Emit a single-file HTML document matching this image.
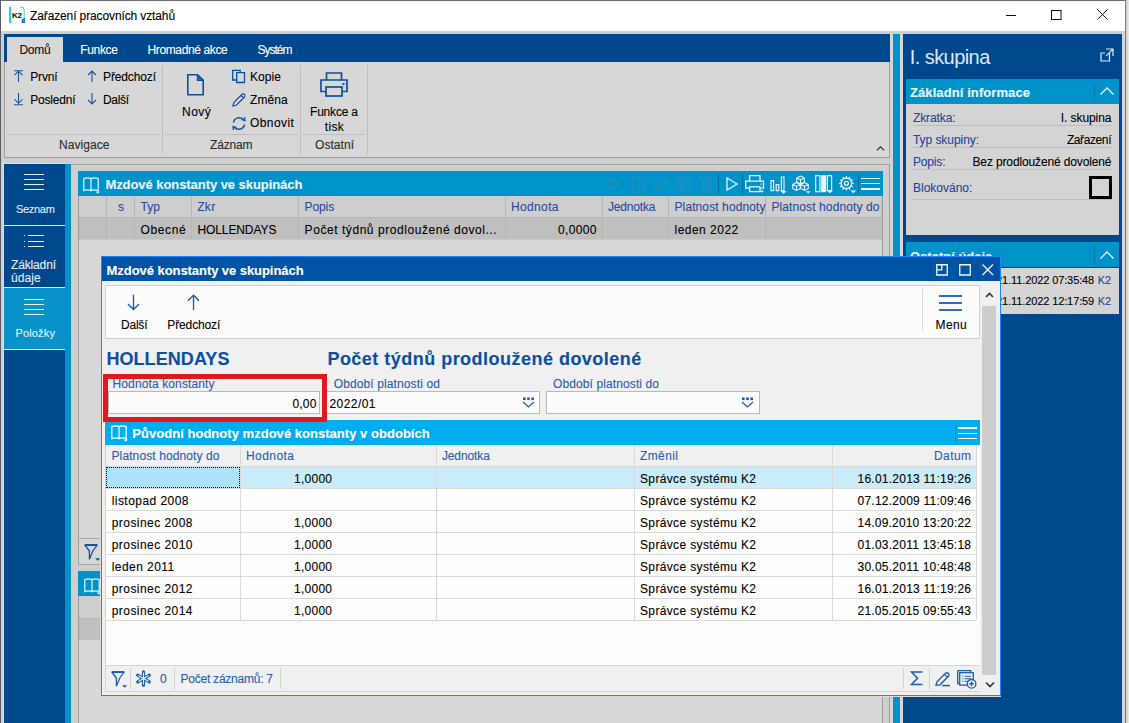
<!DOCTYPE html>
<html><head><meta charset="utf-8">
<style>
*{margin:0;padding:0;box-sizing:border-box}
html,body{width:1129px;height:723px;overflow:hidden;background:#d4d4d4;font-family:"Liberation Sans",sans-serif;font-size:12px;color:#000}
.a{position:absolute}
.t{position:absolute;white-space:nowrap;line-height:1;-webkit-text-stroke:0.1px currentColor}
svg{position:absolute;overflow:visible}
</style></head><body>
<div class="a" style="left:1px;top:1px;width:1124px;height:30px;background:#fff;"></div>
<div class="a" style="left:0px;top:0px;width:1126px;height:1px;background:#6e6e6e;"></div>
<div class="a" style="left:0px;top:0px;width:1px;height:723px;background:#5a5f66;"></div>
<div class="a" style="left:1125px;top:0px;width:1px;height:723px;background:#7d7d7d;"></div>
<div class="a" style="left:1126px;top:0px;width:3px;height:723px;background:linear-gradient(90deg,#c9c9c9,#efefef);"></div>
<div class="a" style="left:9px;top:7px;width:2px;height:16px;background:#16dcf2;"></div>
<div class="t" style="top:11.60px;font-size:7px;color:#151515;font-weight:bold;left:12.3px;letter-spacing:-0.2px;transform:scaleX(1.15);transform-origin:left;">K2</div>
<svg style="left:19px;top:6px;" width="7" height="18" viewBox="0 0 7 18"><path d="M1 1 L4.5 1.5 M3.2 1.2 L5.2 3.2 L5.2 11.5" stroke="#33cbe8" stroke-width="0.9" fill="none"/><path d="M2.8 13 Q5 12 6 11.5 L6 17 L2.5 17 Z" fill="#2877d6"/></svg>
<div class="t" style="top:10.00px;font-size:12px;color:#000;letter-spacing:-0.121px;left:30px;">Zařazení pracovních vztahů</div>
<div class="a" style="left:1006px;top:15px;width:10px;height:1px;background:#111;"></div>
<svg style="left:1051px;top:10px;" width="11" height="10" viewBox="0 0 11 10"><rect x="0.5" y="0.5" width="9.5" height="9" fill="none" stroke="#111" stroke-width="1"/></svg>
<svg style="left:1097px;top:9px;" width="11" height="11" viewBox="0 0 11 11"><path d="M0.5 0.5 L10.5 10.5 M10.5 0.5 L0.5 10.5" stroke="#111" stroke-width="1"/></svg>
<div class="a" style="left:1px;top:31px;width:1124px;height:692px;background:#cfcfcf;"></div>
<div class="a" style="left:4px;top:34px;width:886px;height:28px;background:#00488d;"></div>
<div class="a" style="left:7px;top:37px;width:56px;height:25px;background:#d7d7d7;"></div>
<div class="t" style="top:44.00px;font-size:12px;color:#111;letter-spacing:-0.205px;left:19.4px;">Domů</div>
<div class="t" style="top:44.00px;font-size:12px;color:#fff;letter-spacing:-0.329px;left:80.2px;">Funkce</div>
<div class="t" style="top:44.00px;font-size:12px;color:#fff;letter-spacing:-0.375px;left:147.5px;">Hromadné akce</div>
<div class="t" style="top:44.00px;font-size:12px;color:#fff;letter-spacing:-1.0px;left:257.5px;">Systém</div>
<div class="a" style="left:4px;top:62px;width:886px;height:96px;background:#d7d7d7;"></div>
<div class="a" style="left:4px;top:62px;width:1px;height:96px;background:#a0a0a0;"></div>
<div class="a" style="left:889px;top:62px;width:1px;height:96px;background:#a0a0a0;"></div>
<div class="a" style="left:4px;top:157px;width:886px;height:1px;background:#9c9c9c;"></div>
<div class="a" style="left:162px;top:65px;width:1px;height:89px;background:#bdbdbd;"></div>
<div class="a" style="left:300px;top:65px;width:1px;height:89px;background:#bdbdbd;"></div>
<div class="a" style="left:367px;top:65px;width:1px;height:89px;background:#bdbdbd;"></div>
<div class="a" style="left:7px;top:134px;width:153px;height:1px;background:#bdbdbd;"></div>
<div class="a" style="left:165px;top:134px;width:133px;height:1px;background:#bdbdbd;"></div>
<div class="a" style="left:303px;top:134px;width:62px;height:1px;background:#bdbdbd;"></div>
<div class="t" style="top:138.50px;font-size:12px;color:#2b2b2b;letter-spacing:0.053px;left:59px;">Navigace</div>
<div class="t" style="top:138.50px;font-size:12px;color:#2b2b2b;letter-spacing:-0.149px;left:210px;">Záznam</div>
<div class="t" style="top:138.50px;font-size:12px;color:#2b2b2b;letter-spacing:0.057px;left:315px;">Ostatní</div>
<svg style="left:13px;top:70px;" width="11" height="13" viewBox="0 0 11 13"><path d="M1 0.75 H10 M5.5 1.5 V12 M1.5 5.2 L5.5 1.2 L9.5 5.2" stroke="#1f5096" stroke-width="1.1" fill="none"/></svg>
<div class="t" style="top:71.00px;font-size:12px;color:#000;letter-spacing:-0.125px;left:30.2px;">První</div>
<svg style="left:13px;top:93px;" width="11" height="13" viewBox="0 0 11 13"><path d="M5.5 0 V10.2 M1.5 6.3 L5.5 10.3 L9.5 6.3 M1 11.8 H10" stroke="#1f5096" stroke-width="1.1" fill="none"/></svg>
<div class="t" style="top:94.00px;font-size:12px;color:#000;letter-spacing:-0.17px;left:30.2px;">Poslední</div>
<svg style="left:87px;top:70px;" width="10" height="13" viewBox="0 0 10 13"><path d="M5 1 V12 M1 5 L5 1 L9 5" stroke="#1f5096" stroke-width="1.1" fill="none"/></svg>
<div class="t" style="top:71.00px;font-size:12px;color:#000;letter-spacing:-0.127px;left:103px;">Předchozí</div>
<svg style="left:87px;top:93px;" width="10" height="13" viewBox="0 0 10 13"><path d="M5 0 V11 M1 7 L5 11 L9 7" stroke="#1f5096" stroke-width="1.1" fill="none"/></svg>
<div class="t" style="top:94.00px;font-size:12px;color:#000;letter-spacing:-0.336px;left:103px;">Další</div>
<svg style="left:187px;top:74px;" width="18" height="22" viewBox="0 0 18 22"><path d="M0.8 0.8 H10.6 L16.2 6.2 V20.8 H0.8 Z M10.6 0.8 V6.2 H16.2" stroke="#0e4f9d" stroke-width="1.6" fill="none"/><path d="M11.4 2.2 L14.8 5.4 H11.4 Z" fill="#0e4f9d"/></svg>
<div class="t" style="top:106.00px;font-size:12px;color:#000;letter-spacing:0.485px;left:182px;">Nový</div>
<svg style="left:232px;top:69px;" width="14" height="16" viewBox="0 0 14 16"><path d="M0.7 1.3 H8.2 V11 H0.7 Z" stroke="#0e4f9d" stroke-width="1.3" fill="none"/><path d="M4.7 3.7 H12.5 V13.5 H4.7 Z" stroke="#0e4f9d" stroke-width="1.3" fill="#d7d7d7"/></svg>
<div class="t" style="top:71.00px;font-size:12px;color:#000;letter-spacing:0.078px;left:250px;">Kopie</div>
<svg style="left:232px;top:93px;" width="14" height="14" viewBox="0 0 14 14"><path d="M1 13 L1.8 9.5 L10 1.3 Q11.3 0.3 12.5 1.5 Q13.5 2.7 12.5 4 L4.3 12.2 Z M9 2.5 L11.5 5" stroke="#0e4f9d" stroke-width="1.15" fill="none"/></svg>
<div class="t" style="top:94.00px;font-size:12px;color:#000;letter-spacing:0.064px;left:250px;">Změna</div>
<svg style="left:232px;top:116px;" width="14" height="15" viewBox="0 0 14 15"><path d="M1.5 6.5 A5.8 5.8 0 0 1 11.8 4 M12.5 8.5 A5.8 5.8 0 0 1 2.2 11" stroke="#0e4f9d" stroke-width="1.4" fill="none"/><path d="M9.5 3.5 L13 4.5 L12.5 1" stroke="#0e4f9d" stroke-width="1.3" fill="none"/><path d="M4.5 11.5 L1 10.5 L1.5 14" stroke="#0e4f9d" stroke-width="1.3" fill="none"/></svg>
<div class="t" style="top:117.00px;font-size:12px;color:#000;letter-spacing:0.409px;left:250px;">Obnovit</div>
<svg style="left:320px;top:72px;" width="28" height="25" viewBox="0 0 28 25"><path d="M6.5 8 V1 H21.5 V8" stroke="#0e4f9d" stroke-width="1.7" fill="none"/><path d="M5.5 19.5 H1 V8 H27 V19.5 H22.5" stroke="#0e4f9d" stroke-width="1.7" fill="none"/><rect x="6" y="15" width="16" height="9" stroke="#0e4f9d" stroke-width="1.7" fill="none"/><rect x="22.5" y="11" width="2" height="2" fill="#0e4f9d"/></svg>
<div class="t" style="top:106.00px;font-size:12px;color:#000;letter-spacing:-0.192px;left:310px;">Funkce a</div>
<div class="t" style="top:120.50px;font-size:12px;color:#000;letter-spacing:0.3px;left:324.8px;">tisk</div>
<svg style="left:875.5px;top:145.5px;" width="10" height="6" viewBox="0 0 10 6"><path d="M0.9 4.3 L4.5 0.8 L8.1 4.3" stroke="#2a2a2a" stroke-width="1.1" fill="none"/></svg>
<div class="a" style="left:3px;top:163px;width:62px;height:560px;background:#e2ded9;"></div>
<div class="a" style="left:4px;top:164px;width:61px;height:559px;background:#00488d;"></div>
<div class="a" style="left:65px;top:164px;width:6px;height:559px;background:#0093ca;"></div>
<div class="a" style="left:24px;top:174px;width:20px;height:1.3px;background:#e6edf5;"></div>
<div class="a" style="left:24px;top:179px;width:20px;height:1.3px;background:#e6edf5;"></div>
<div class="a" style="left:24px;top:184px;width:20px;height:1.3px;background:#e6edf5;"></div>
<div class="a" style="left:24px;top:189px;width:20px;height:1.3px;background:#e6edf5;"></div>
<div class="t" style="top:204.00px;font-size:11px;color:#e6edf5;letter-spacing:-0.275px;left:15.9px;">Seznam</div>
<div class="a" style="left:4px;top:225px;width:61px;height:1.3px;background:#dfe7f0;"></div>
<div class="a" style="left:24px;top:235px;width:1.3px;height:1.3px;background:#e6edf5;"></div>
<div class="a" style="left:28px;top:235px;width:16px;height:1.3px;background:#e6edf5;"></div>
<div class="a" style="left:24px;top:240.5px;width:1.3px;height:1.3px;background:#e6edf5;"></div>
<div class="a" style="left:28px;top:240.5px;width:16px;height:1.3px;background:#e6edf5;"></div>
<div class="a" style="left:24px;top:246px;width:1.3px;height:1.3px;background:#e6edf5;"></div>
<div class="a" style="left:28px;top:246px;width:16px;height:1.3px;background:#e6edf5;"></div>
<div class="t" style="top:259.40px;font-size:12px;color:#e6edf5;letter-spacing:-0.145px;left:11px;">Základní</div>
<div class="t" style="top:272.00px;font-size:12px;color:#e6edf5;letter-spacing:0.085px;left:11px;">údaje</div>
<div class="a" style="left:4px;top:287px;width:61px;height:1.3px;background:#dfe7f0;"></div>
<div class="a" style="left:4px;top:288.3px;width:61px;height:60.4px;background:#0a92ca;"></div>
<div class="a" style="left:24px;top:298.5px;width:20px;height:1.3px;background:#e6f2f9;"></div>
<div class="a" style="left:24px;top:303.5px;width:20px;height:1.3px;background:#e6f2f9;"></div>
<div class="a" style="left:24px;top:309px;width:20px;height:1.3px;background:#e6f2f9;"></div>
<div class="a" style="left:24px;top:314px;width:20px;height:1.3px;background:#e6f2f9;"></div>
<div class="t" style="top:328.00px;font-size:11px;color:#e6f2f9;letter-spacing:0.145px;left:15.5px;">Položky</div>
<div class="a" style="left:4px;top:348.7px;width:61px;height:1.3px;background:#dfe7f0;"></div>
<div class="a" style="left:71px;top:164px;width:819px;height:559px;background:#cfcfcf;"></div>
<div class="a" style="left:71px;top:164px;width:819px;height:1px;background:#a3a3a3;"></div>
<div class="a" style="left:889px;top:164px;width:1px;height:559px;background:#9c9c9c;"></div>
<div class="a" style="left:890px;top:34px;width:3px;height:689px;background:#d6d6d6;"></div>
<div class="a" style="left:893px;top:34px;width:7px;height:689px;background:#0093ca;"></div>
<div class="a" style="left:900px;top:34px;width:3px;height:689px;background:#dcd6d1;"></div>
<div class="a" style="left:78px;top:171px;width:805px;height:394px;background:#d7d7d7;"></div>
<div class="a" style="left:78px;top:171px;width:1px;height:394px;background:#9c9c9c;"></div>
<div class="a" style="left:882px;top:171px;width:1px;height:394px;background:#9c9c9c;"></div>
<div class="a" style="left:78px;top:171px;width:805px;height:24.5px;background:#0093ca;"></div>
<svg style="left:83px;top:177px;" width="18" height="17" viewBox="0 0 18 17"><path d="M0.8 1.6 Q4.4 0.2 8 1.6 V13.6 Q4.4 12.2 0.8 13.6 Z M8 1.6 Q11.6 0.2 15.2 1.6 V13.6 Q11.6 12.2 8 13.6" stroke="#e8f4fa" stroke-width="1.2" fill="none"/><path d="M12.5 14.6 H17 L14.75 16.8 Z" fill="#e8f4fa"/></svg>
<div class="t" style="top:178.00px;font-size:13px;color:#eef6fb;font-weight:bold;letter-spacing:-0.06px;left:105.4px;">Mzdové konstanty ve skupinách</div>
<div class="a" style="left:79px;top:195.5px;width:802px;height:21.5px;background:#cecece;"></div>
<div class="a" style="left:79px;top:217px;width:802px;height:22px;background:#bfbfbf;"></div>
<div class="a" style="left:79px;top:217px;width:802px;height:1px;background:#b9b9b9;"></div>
<div class="a" style="left:79px;top:239px;width:802px;height:1px;background:#c8c8c8;"></div>
<div class="a" style="left:106px;top:195.5px;width:1px;height:44px;background:#b5b5b5;"></div>
<div class="a" style="left:134px;top:195.5px;width:1px;height:44px;background:#b5b5b5;"></div>
<div class="a" style="left:191px;top:195.5px;width:1px;height:44px;background:#b5b5b5;"></div>
<div class="a" style="left:298px;top:195.5px;width:1px;height:44px;background:#b5b5b5;"></div>
<div class="a" style="left:505px;top:195.5px;width:1px;height:44px;background:#b5b5b5;"></div>
<div class="a" style="left:602px;top:195.5px;width:1px;height:44px;background:#b5b5b5;"></div>
<div class="a" style="left:668px;top:195.5px;width:1px;height:44px;background:#b5b5b5;"></div>
<div class="a" style="left:765px;top:195.5px;width:1px;height:44px;background:#b5b5b5;"></div>
<div class="a" style="left:880.5px;top:195.5px;width:1px;height:44px;background:#c4c4c4;"></div>
<div class="t" style="top:201.00px;font-size:12px;color:#2b4a9a;left:118px;">s</div>
<div class="t" style="top:201.00px;font-size:12px;color:#2b4a9a;letter-spacing:0.078px;left:140.4px;">Typ</div>
<div class="t" style="top:201.00px;font-size:12px;color:#2b4a9a;letter-spacing:0.336px;left:197.2px;">Zkr</div>
<div class="t" style="top:201.00px;font-size:12px;color:#2b4a9a;letter-spacing:-0.079px;left:304.5px;">Popis</div>
<div class="t" style="top:201.00px;font-size:12px;color:#2b4a9a;letter-spacing:0.357px;left:511px;">Hodnota</div>
<div class="t" style="top:201.00px;font-size:12px;color:#2b4a9a;letter-spacing:-0.17px;left:608px;">Jednotka</div>
<div class="t" style="top:201.00px;font-size:12px;color:#2b4a9a;letter-spacing:0.103px;left:674.5px;">Platnost hodnoty</div>
<div class="t" style="top:201.00px;font-size:12px;color:#2b4a9a;letter-spacing:0.109px;left:771.4px;">Platnost hodnoty do</div>
<div class="t" style="top:224.00px;font-size:12px;color:#000;letter-spacing:0.597px;left:140.6px;">Obecné</div>
<div class="t" style="top:224.00px;font-size:12px;color:#000;letter-spacing:-0.089px;left:197.4px;">HOLLENDAYS</div>
<div class="t" style="top:224.00px;font-size:12px;color:#000;letter-spacing:0.557px;left:304.6px;">Počet týdnů prodloužené dovol...</div>
<div class="t" style="top:224.00px;font-size:12px;color:#000;letter-spacing:0.342px;right:532.258px;">0,0000</div>
<div class="t" style="top:224.00px;font-size:12px;color:#000;letter-spacing:0.481px;left:674.5px;">leden 2022</div>
<svg style="left:609px;top:177px;" width="12" height="14" viewBox="0 0 12 14"><path d="M1 1 L11 7 L1 13 Z" stroke="#2e8dbb" stroke-width="1.2" fill="none"/></svg>
<svg style="left:631px;top:176px;" width="14" height="17" viewBox="0 0 14 17"><path d="M1 1 H9 L13 5 V16 H1 Z" stroke="#2e8dbb" stroke-width="1.2" fill="none"/></svg>
<svg style="left:654px;top:177px;" width="15" height="15" viewBox="0 0 15 15"><path d="M1 14 L2 10 L11 1 L14 4 L5 13 Z" stroke="#2e8dbb" stroke-width="1.2" fill="none"/></svg>
<svg style="left:676px;top:176px;" width="16" height="17" viewBox="0 0 16 17"><path d="M1 1 H9 V13 H1 Z M5 4 H14 V16 H5 Z" stroke="#2e8dbb" stroke-width="1.2" fill="none"/></svg>
<svg style="left:701px;top:176px;" width="12" height="17" viewBox="0 0 12 17"><path d="M1 4 H11 M4 4 V1 H8 V4 M2 4 V16 H10 V4 M4.5 7 V13 M7.5 7 V13" stroke="#2e8dbb" stroke-width="1.2" fill="none"/></svg>
<div class="a" style="left:718px;top:174px;width:1px;height:20px;background:#0a6d9d;"></div>
<svg style="left:726px;top:177px;" width="12" height="14" viewBox="0 0 12 14"><path d="M1 1 L11 7 L1 13 Z" stroke="#e8f4fa" stroke-width="1.3" fill="none"/></svg>
<div class="a" style="left:742px;top:174px;width:1px;height:20px;background:#0a6d9d;"></div>
<svg style="left:745px;top:175px;" width="20" height="19" viewBox="0 0 20 19"><path d="M4.6 6.2 V0.7 H15 V6.2" stroke="#eaf3f8" stroke-width="1.3" fill="none"/><path d="M4 13.2 H0.7 V6.2 H18.5 V13.2 H15.5" stroke="#eaf3f8" stroke-width="1.3" fill="none"/><rect x="4.6" y="11.8" width="10.4" height="4.8" stroke="#eaf3f8" stroke-width="1.3" fill="none"/><rect x="15.2" y="8.6" width="1.6" height="1" fill="#eaf3f8"/><path d="M15 15.5 H19 L17 17.8 Z" fill="#eaf3f8"/></svg>
<svg style="left:770px;top:176px;" width="18" height="19" viewBox="0 0 18 19"><path d="M1 4.7 H3.6 V14.6 H1 Z M6.2 8.6 H8.8 V14.6 H6.2 Z M11.4 1 H14 V14.6 H11.4 Z" stroke="#eaf3f8" stroke-width="1.2" fill="none"/><path d="M10.5 15 H16.5 L13.5 18 Z" fill="#eaf3f8"/></svg>
<svg style="left:792px;top:175px;" width="19" height="19" viewBox="0 0 19 19"><path d="M4.5 7.5 L8.3 9.4 V13.6 L4.5 15.5 L0.7000000000000002 13.6 V9.4 Z M0.7000000000000002 9.4 L4.5 11.3 L8.3 9.4 M4.5 11.3 V15.5" stroke="#eaf3f8" stroke-width="1.1" fill="#0991c9" stroke-linejoin="round"/><path d="M12.5 7.5 L16.3 9.4 V13.6 L12.5 15.5 L8.7 13.6 V9.4 Z M8.7 9.4 L12.5 11.3 L16.3 9.4 M12.5 11.3 V15.5" stroke="#eaf3f8" stroke-width="1.1" fill="#0991c9" stroke-linejoin="round"/><path d="M8.5 1 L12.3 2.9 V7.1 L8.5 9 L4.7 7.1 V2.9 Z M4.7 2.9 L8.5 4.8 L12.3 2.9 M8.5 4.8 V9" stroke="#eaf3f8" stroke-width="1.1" fill="#0991c9" stroke-linejoin="round"/><path d="M14 16.2 H18.5 L16.25 18.5 Z" fill="#eaf3f8"/></svg>
<svg style="left:815px;top:175px;" width="19" height="19" viewBox="0 0 19 19"><rect x="0.7" y="0.7" width="4.2" height="16" stroke="#eaf3f8" stroke-width="1.2" fill="none"/><rect x="6.2" y="0.2" width="5" height="17" fill="#eaf3f8"/><rect x="12.4" y="0.7" width="4.2" height="15" stroke="#eaf3f8" stroke-width="1.2" fill="none"/><path d="M12 15.5 H18 L15 18.3 Z" fill="#eaf3f8"/></svg>
<svg style="left:840px;top:176px;" width="19" height="19" viewBox="0 0 19 19"><circle cx="6.4" cy="7.3" r="5.3" stroke="#eaf3f8" stroke-width="1.3" fill="none"/><circle cx="6.4" cy="7.3" r="2.0" stroke="#eaf3f8" stroke-width="1.3" fill="none"/><path d="M0 -5.6 L0 -7.3" transform="translate(6.4 7.3) rotate(0)" stroke="#eaf3f8" stroke-width="1.2"/><path d="M0 -5.6 L0 -7.3" transform="translate(6.4 7.3) rotate(30)" stroke="#eaf3f8" stroke-width="1.2"/><path d="M0 -5.6 L0 -7.3" transform="translate(6.4 7.3) rotate(60)" stroke="#eaf3f8" stroke-width="1.2"/><path d="M0 -5.6 L0 -7.3" transform="translate(6.4 7.3) rotate(90)" stroke="#eaf3f8" stroke-width="1.2"/><path d="M0 -5.6 L0 -7.3" transform="translate(6.4 7.3) rotate(120)" stroke="#eaf3f8" stroke-width="1.2"/><path d="M0 -5.6 L0 -7.3" transform="translate(6.4 7.3) rotate(150)" stroke="#eaf3f8" stroke-width="1.2"/><path d="M0 -5.6 L0 -7.3" transform="translate(6.4 7.3) rotate(180)" stroke="#eaf3f8" stroke-width="1.2"/><path d="M0 -5.6 L0 -7.3" transform="translate(6.4 7.3) rotate(210)" stroke="#eaf3f8" stroke-width="1.2"/><path d="M0 -5.6 L0 -7.3" transform="translate(6.4 7.3) rotate(240)" stroke="#eaf3f8" stroke-width="1.2"/><path d="M0 -5.6 L0 -7.3" transform="translate(6.4 7.3) rotate(270)" stroke="#eaf3f8" stroke-width="1.2"/><path d="M0 -5.6 L0 -7.3" transform="translate(6.4 7.3) rotate(300)" stroke="#eaf3f8" stroke-width="1.2"/><path d="M0 -5.6 L0 -7.3" transform="translate(6.4 7.3) rotate(330)" stroke="#eaf3f8" stroke-width="1.2"/><path d="M10.5 14.6 H16 L13.25 17.3 Z" fill="#eaf3f8"/></svg>
<div class="a" style="left:858px;top:174px;width:1px;height:20px;background:#0a6d9d;"></div>
<div class="a" style="left:861px;top:177.6px;width:19px;height:1.4px;background:#eaf3f8;"></div>
<div class="a" style="left:861px;top:183px;width:19px;height:1.4px;background:#eaf3f8;"></div>
<div class="a" style="left:861px;top:188.3px;width:19px;height:1.4px;background:#eaf3f8;"></div>
<div class="a" style="left:79px;top:538px;width:803px;height:1px;background:#a8a8a8;"></div>
<div class="a" style="left:79px;top:539px;width:803px;height:25px;background:#d7d7d7;"></div>
<div class="a" style="left:79px;top:564px;width:803px;height:1px;background:#a8a8a8;"></div>
<svg style="left:84px;top:543.5px;" width="18" height="18" viewBox="0 0 18 18"><path d="M0.8 1 L5.4 7 V15.3 L8.8 7 L13.2 1 Z" stroke="#0e4f9d" stroke-width="1.25" fill="none" stroke-linejoin="bevel"/><path d="M0.8 1 H13.2" stroke="#0e4f9d" stroke-width="1.8"/><path d="M11.2 14.3 H16.2 L13.7 16.8 Z" fill="#0e4f9d"/></svg>
<div class="a" style="left:105px;top:539px;width:1px;height:25px;background:#b8b8b8;"></div>
<div class="a" style="left:78px;top:571px;width:805px;height:152px;background:#d7d7d7;"></div>
<div class="a" style="left:78px;top:571px;width:1px;height:152px;background:#9c9c9c;"></div>
<div class="a" style="left:882px;top:571px;width:1px;height:152px;background:#9c9c9c;"></div>
<div class="a" style="left:78px;top:571px;width:805px;height:25px;background:#0093ca;"></div>
<svg style="left:84px;top:578px;" width="18" height="17" viewBox="0 0 18 17"><path d="M0.8 1.6 Q4.4 0.2 8 1.6 V13.6 Q4.4 12.2 0.8 13.6 Z M8 1.6 Q11.6 0.2 15.2 1.6 V13.6 Q11.6 12.2 8 13.6" stroke="#e8f4fa" stroke-width="1.2" fill="none"/><path d="M12.5 14.6 H17 L14.75 16.8 Z" fill="#e8f4fa"/></svg>
<div class="a" style="left:79px;top:596px;width:802px;height:21.5px;background:#cecece;"></div>
<div class="a" style="left:79px;top:617.5px;width:802px;height:22px;background:#bfbfbf;"></div>
<div class="a" style="left:79px;top:617.5px;width:802px;height:1px;background:#b9b9b9;"></div>
<div class="a" style="left:903px;top:34px;width:219px;height:689px;background:#00488d;"></div>
<div class="a" style="left:1122px;top:34px;width:3px;height:689px;background:#d6d6d6;"></div>
<div class="t" style="top:46.70px;font-size:20px;color:#dfe7f1;letter-spacing:-0.558px;left:909.7px;-webkit-text-stroke:0;">I. skupina</div>
<svg style="left:1100px;top:48px;" width="14" height="14" viewBox="0 0 14 14"><path d="M6 1 H13 V8 M12.8 1.2 L6.2 7.8 M9.5 5 V13 H1 V5 H5" stroke="#e3ebf4" stroke-width="1.2" fill="none"/></svg>
<div class="a" style="left:906px;top:79px;width:213px;height:25px;background:#0093ca;"></div>
<div class="t" style="top:86.00px;font-size:13px;color:#eef6fb;font-weight:bold;letter-spacing:0.089px;left:910px;">Základní informace</div>
<div class="a" style="left:1094px;top:83px;width:1px;height:18px;background:#0b77a8;"></div>
<svg style="left:1100px;top:87px;" width="14" height="8" viewBox="0 0 14 8"><path d="M0.5 7.5 L7 1 L13.5 7.5" stroke="#eef6fb" stroke-width="1.3" fill="none"/></svg>
<div class="a" style="left:906px;top:104px;width:213px;height:131px;background:#d4d4d4;"></div>
<div class="t" style="top:111.80px;font-size:12px;color:#27449a;letter-spacing:-0.118px;left:913px;">Zkratka:</div>
<div class="t" style="top:111.80px;font-size:12px;color:#000;letter-spacing:-0.06px;right:17.559999999999945px;">I. skupina</div>
<div class="a" style="left:913px;top:125px;width:199px;height:1px;background:#bdbdbd;"></div>
<div class="t" style="top:134.00px;font-size:12px;color:#27449a;letter-spacing:-0.062px;left:913px;">Typ skupiny:</div>
<div class="t" style="top:134.00px;font-size:12px;color:#000;letter-spacing:-0.392px;right:17.892000000000053px;">Zařazení</div>
<div class="a" style="left:913px;top:147px;width:199px;height:1px;background:#bdbdbd;"></div>
<div class="t" style="top:155.60px;font-size:12px;color:#27449a;letter-spacing:-0.169px;left:913px;">Popis:</div>
<div class="t" style="top:155.60px;font-size:12px;color:#000;letter-spacing:-0.134px;right:17.634000000000015px;">Bez prodloužené dovolené</div>
<div class="a" style="left:913px;top:169px;width:199px;height:1px;background:#bdbdbd;"></div>
<div class="t" style="top:182.00px;font-size:12px;color:#27449a;letter-spacing:-0.007px;left:913px;">Blokováno:</div>
<div class="a" style="left:913px;top:199px;width:199px;height:1px;background:#bdbdbd;"></div>
<div class="a" style="left:1089px;top:176px;width:23px;height:23px;background:#d4d4d4;border:3.5px solid #000;"></div>
<div class="a" style="left:906px;top:242px;width:213px;height:25.3px;background:#0093ca;"></div>
<div class="t" style="top:250.00px;font-size:13px;color:#eef6fb;font-weight:bold;left:910px;">Ostatní údaje</div>
<div class="a" style="left:1094px;top:247px;width:1px;height:18px;background:#0b77a8;"></div>
<svg style="left:1100px;top:251px;" width="14" height="8" viewBox="0 0 14 8"><path d="M0.5 7.5 L7 1 L13.5 7.5" stroke="#eef6fb" stroke-width="1.3" fill="none"/></svg>
<div class="a" style="left:906px;top:268px;width:213px;height:46px;background:#d4d4d4;"></div>
<div class="t" style="top:275.00px;font-size:11px;color:#000;letter-spacing:-0.11px;right:34.90000000000009px;">21.11.2022 07:35:48</div>
<div class="t" style="top:275.00px;font-size:11px;color:#27449a;letter-spacing:-0.2px;right:18.09999999999991px;">K2</div>
<div class="t" style="top:296.00px;font-size:11px;color:#000;letter-spacing:-0.11px;right:34.90000000000009px;">21.11.2022 12:17:59</div>
<div class="t" style="top:296.00px;font-size:11px;color:#27449a;letter-spacing:-0.2px;right:18.09999999999991px;">K2</div>
<div class="a" style="left:100px;top:256px;width:1px;height:441px;background:#e2dbd4;"></div>
<div class="a" style="left:100px;top:696px;width:901px;height:1px;background:#e2dbd4;"></div>
<div class="a" style="left:101px;top:256px;width:900px;height:440px;background:#f0f0f0;border:1px solid #1c86f6;"></div>
<div class="a" style="left:102px;top:257px;width:898px;height:24.4px;background:#0153a5;"></div>
<div class="t" style="top:264.00px;font-size:13px;color:#fff;font-weight:bold;letter-spacing:-0.06px;left:106.6px;">Mzdové konstanty ve skupinách</div>
<div class="a" style="left:929px;top:259px;width:1px;height:21px;background:#0a3f80;"></div>
<svg style="left:935.5px;top:264px;" width="13" height="13" viewBox="0 0 13 13"><path d="M0.75 0.75 H11.25 V11 H0.75 Z M0.75 5.8 H5.8 V0.75" stroke="#f2f6fb" stroke-width="1.3" fill="none"/></svg>
<svg style="left:958.5px;top:264px;" width="13" height="13" viewBox="0 0 13 13"><path d="M0.75 0.75 H11.25 V11 H0.75 Z" stroke="#f2f6fb" stroke-width="1.3" fill="none"/></svg>
<svg style="left:982px;top:264px;" width="12" height="12" viewBox="0 0 12 12"><path d="M0.5 0.5 L11 11 M11 0.5 L0.5 11" stroke="#f2f6fb" stroke-width="1.3" fill="none"/></svg>
<div class="a" style="left:105px;top:285px;width:875px;height:54px;background:#fcfcfc;border:1px solid #cfcfcf;"></div>
<svg style="left:127px;top:294px;" width="13" height="17" viewBox="0 0 13 17"><path d="M6.5 0.5 V15.5 M1 10 L6.5 15.5 L12 10" stroke="#1b5cad" stroke-width="1.35" fill="none"/></svg>
<div class="t" style="top:318.50px;font-size:12px;color:#000;letter-spacing:-0.211px;left:121px;">Další</div>
<svg style="left:187px;top:294px;" width="13" height="17" viewBox="0 0 13 17"><path d="M6.5 16 V1.2 M1 6.7 L6.5 1.2 L12 6.7" stroke="#1b5cad" stroke-width="1.35" fill="none"/></svg>
<div class="t" style="top:318.50px;font-size:12px;color:#000;letter-spacing:-0.127px;left:167.3px;">Předchozí</div>
<div class="a" style="left:922px;top:289px;width:1px;height:42px;background:#d6d6d6;"></div>
<div class="a" style="left:939px;top:295px;width:23px;height:1.8px;background:#2d6ebd;"></div>
<div class="a" style="left:939px;top:302px;width:23px;height:1.8px;background:#2d6ebd;"></div>
<div class="a" style="left:939px;top:309px;width:23px;height:1.8px;background:#2d6ebd;"></div>
<div class="t" style="top:319.00px;font-size:12px;color:#000;letter-spacing:0.395px;left:935.5px;">Menu</div>
<div class="a" style="left:980px;top:281.4px;width:19px;height:413.6px;background:#f0f0f0;"></div>
<div class="a" style="left:982px;top:306px;width:14px;height:369px;background:#cdcdcd;"></div>
<svg style="left:985px;top:292px;" width="9" height="6" viewBox="0 0 9 6"><path d="M1 5 L4.5 1.5 L8 5" stroke="#333" stroke-width="1.6" fill="none"/></svg>
<svg style="left:985px;top:681px;" width="10" height="7" viewBox="0 0 10 7"><path d="M1 1.5 L5 5.5 L9 1.5" stroke="#333" stroke-width="1.6" fill="none"/></svg>
<div class="t" style="top:349.70px;font-size:18px;color:#0b4fa3;font-weight:bold;letter-spacing:0.073px;left:106.4px;">HOLLENDAYS</div>
<div class="t" style="top:349.50px;font-size:18px;color:#0b4fa3;font-weight:bold;letter-spacing:0.48px;left:327.4px;">Počet týdnů prodloužené dovolené</div>
<div class="t" style="top:377.60px;font-size:12px;color:#2a5cb0;letter-spacing:0.123px;left:112.5px;">Hodnota konstanty</div>
<div class="a" style="left:108px;top:391px;width:212px;height:23px;background:#fcfcfc;border:1px solid #b9b9b9;"></div>
<div class="t" style="top:397.80px;font-size:12px;color:#000;letter-spacing:0.219px;right:812.3810000000001px;">0,00</div>
<div class="t" style="top:377.80px;font-size:12px;color:#2a5cb0;letter-spacing:0.109px;left:333.8px;">Období platnosti od</div>
<div class="a" style="left:326px;top:391px;width:214px;height:23px;background:#fcfcfc;border:1px solid #b9b9b9;"></div>
<div class="t" style="top:397.80px;font-size:12px;color:#000;letter-spacing:0.44px;left:329.5px;">2022/01</div>
<svg style="left:522px;top:397px;" width="13" height="11" viewBox="0 0 13 11"><rect x="1" y="0.5" width="2.6" height="2.6" fill="#1f5aa6"/><rect x="5.2" y="0.5" width="2.6" height="2.6" fill="#1f5aa6"/><rect x="9.4" y="0.5" width="2.6" height="2.6" fill="#1f5aa6"/><path d="M1 5 L6.5 10 L12 5" stroke="#1f5aa6" stroke-width="1.2" fill="none"/></svg>
<div class="t" style="top:377.80px;font-size:12px;color:#2a5cb0;letter-spacing:0.109px;left:553px;">Období platnosti do</div>
<div class="a" style="left:546px;top:391px;width:214px;height:23px;background:#fcfcfc;border:1px solid #b9b9b9;"></div>
<svg style="left:741px;top:397px;" width="13" height="11" viewBox="0 0 13 11"><rect x="1" y="0.5" width="2.6" height="2.6" fill="#1f5aa6"/><rect x="5.2" y="0.5" width="2.6" height="2.6" fill="#1f5aa6"/><rect x="9.4" y="0.5" width="2.6" height="2.6" fill="#1f5aa6"/><path d="M1 5 L6.5 10 L12 5" stroke="#1f5aa6" stroke-width="1.2" fill="none"/></svg>
<div class="a" style="left:105px;top:420px;width:875px;height:25px;background:#00aeef;"></div>
<div class="a" style="left:103px;top:374px;width:224px;height:48px;border:5px solid #e4161e;"></div>
<svg style="left:111px;top:424.5px;" width="18" height="17" viewBox="0 0 18 17"><path d="M0.8 1.6 Q4.4 0.2 8 1.6 V13.6 Q4.4 12.2 0.8 13.6 Z M8 1.6 Q11.6 0.2 15.2 1.6 V13.6 Q11.6 12.2 8 13.6" stroke="#fff" stroke-width="1.2" fill="none"/><path d="M12.5 14.6 H17 L14.75 16.8 Z" fill="#fff"/></svg>
<div class="t" style="top:426.50px;font-size:13px;color:#fff;font-weight:bold;letter-spacing:0.031px;left:132.3px;">Původní hodnoty mzdové konstanty v obdobích</div>
<div class="a" style="left:955px;top:425px;width:1px;height:18px;background:#0a8cc4;"></div>
<div class="a" style="left:958px;top:427.3px;width:19px;height:1.4px;background:#fff;"></div>
<div class="a" style="left:958px;top:432.5px;width:19px;height:1.4px;background:#fff;"></div>
<div class="a" style="left:958px;top:437.6px;width:19px;height:1.4px;background:#fff;"></div>
<div class="a" style="left:105px;top:445px;width:875px;height:220px;background:#fdfdfd;border-left:1px solid #d0d0d0;"></div>
<div class="a" style="left:106px;top:445px;width:870px;height:21.3px;background:#f0f0f0;"></div>
<div class="a" style="left:106px;top:466.3px;width:870px;height:1px;background:#d8d8d8;"></div>
<div class="a" style="left:106px;top:467.3px;width:870px;height:21px;background:#c9ecfa;"></div>
<div class="a" style="left:106px;top:467.3px;width:134px;height:21px;background:#ade3f8;outline:1px dotted #111;outline-offset:-1px;"></div>
<div class="a" style="left:106px;top:488.3px;width:870px;height:1px;background:#d9d9d9;"></div>
<div class="a" style="left:106px;top:510.3px;width:870px;height:1px;background:#d9d9d9;"></div>
<div class="a" style="left:106px;top:532.3px;width:870px;height:1px;background:#d9d9d9;"></div>
<div class="a" style="left:106px;top:554.3px;width:870px;height:1px;background:#d9d9d9;"></div>
<div class="a" style="left:106px;top:576.3px;width:870px;height:1px;background:#d9d9d9;"></div>
<div class="a" style="left:106px;top:598.3px;width:870px;height:1px;background:#d9d9d9;"></div>
<div class="a" style="left:106px;top:620.3px;width:870px;height:1px;background:#d9d9d9;"></div>
<div class="a" style="left:240px;top:445px;width:1px;height:175.3px;background:#d9d9d9;"></div>
<div class="a" style="left:436px;top:445px;width:1px;height:175.3px;background:#d9d9d9;"></div>
<div class="a" style="left:634px;top:445px;width:1px;height:175.3px;background:#d9d9d9;"></div>
<div class="a" style="left:832px;top:445px;width:1px;height:175.3px;background:#d9d9d9;"></div>
<div class="a" style="left:976px;top:445px;width:1px;height:175.3px;background:#d9d9d9;"></div>
<div class="t" style="top:450.00px;font-size:12px;color:#2a5cb0;letter-spacing:0.109px;left:111.5px;">Platnost hodnoty do</div>
<div class="t" style="top:450.00px;font-size:12px;color:#2a5cb0;letter-spacing:0.44px;left:246px;">Hodnota</div>
<div class="t" style="top:450.00px;font-size:12px;color:#2a5cb0;letter-spacing:-0.098px;left:441.9px;">Jednotka</div>
<div class="t" style="top:450.00px;font-size:12px;color:#2a5cb0;letter-spacing:0.397px;left:640px;">Změnil</div>
<div class="t" style="top:450.00px;font-size:12px;color:#2a5cb0;letter-spacing:0.414px;right:157.586px;">Datum</div>
<div class="t" style="top:473.00px;font-size:12px;color:#000;letter-spacing:0.263px;right:796.7370000000001px;">1,0000</div>
<div class="t" style="top:473.00px;font-size:12px;color:#000;letter-spacing:0.352px;left:640px;">Správce systému K2</div>
<div class="t" style="top:473.00px;font-size:12px;color:#000;letter-spacing:0.236px;right:157.764px;">16.01.2013 11:19:26</div>
<div class="t" style="top:495.00px;font-size:12px;color:#000;letter-spacing:0.45px;left:111.7px;">listopad 2008</div>
<div class="t" style="top:495.00px;font-size:12px;color:#000;letter-spacing:0.352px;left:640px;">Správce systému K2</div>
<div class="t" style="top:495.00px;font-size:12px;color:#000;letter-spacing:0.236px;right:157.764px;">07.12.2009 11:09:46</div>
<div class="t" style="top:517.00px;font-size:12px;color:#000;letter-spacing:0.45px;left:111.7px;">prosinec 2008</div>
<div class="t" style="top:517.00px;font-size:12px;color:#000;letter-spacing:0.263px;right:796.7370000000001px;">1,0000</div>
<div class="t" style="top:517.00px;font-size:12px;color:#000;letter-spacing:0.352px;left:640px;">Správce systému K2</div>
<div class="t" style="top:517.00px;font-size:12px;color:#000;letter-spacing:0.186px;right:157.81399999999996px;">14.09.2010 13:20:22</div>
<div class="t" style="top:539.00px;font-size:12px;color:#000;letter-spacing:0.45px;left:111.7px;">prosinec 2010</div>
<div class="t" style="top:539.00px;font-size:12px;color:#000;letter-spacing:0.263px;right:796.7370000000001px;">1,0000</div>
<div class="t" style="top:539.00px;font-size:12px;color:#000;letter-spacing:0.352px;left:640px;">Správce systému K2</div>
<div class="t" style="top:539.00px;font-size:12px;color:#000;letter-spacing:0.236px;right:157.764px;">01.03.2011 13:45:18</div>
<div class="t" style="top:561.00px;font-size:12px;color:#000;letter-spacing:0.45px;left:111.7px;">leden 2011</div>
<div class="t" style="top:561.00px;font-size:12px;color:#000;letter-spacing:0.263px;right:796.7370000000001px;">1,0000</div>
<div class="t" style="top:561.00px;font-size:12px;color:#000;letter-spacing:0.352px;left:640px;">Správce systému K2</div>
<div class="t" style="top:561.00px;font-size:12px;color:#000;letter-spacing:0.236px;right:157.764px;">30.05.2011 10:48:48</div>
<div class="t" style="top:583.00px;font-size:12px;color:#000;letter-spacing:0.45px;left:111.7px;">prosinec 2012</div>
<div class="t" style="top:583.00px;font-size:12px;color:#000;letter-spacing:0.263px;right:796.7370000000001px;">1,0000</div>
<div class="t" style="top:583.00px;font-size:12px;color:#000;letter-spacing:0.352px;left:640px;">Správce systému K2</div>
<div class="t" style="top:583.00px;font-size:12px;color:#000;letter-spacing:0.236px;right:157.764px;">16.01.2013 11:19:26</div>
<div class="t" style="top:605.00px;font-size:12px;color:#000;letter-spacing:0.45px;left:111.7px;">prosinec 2014</div>
<div class="t" style="top:605.00px;font-size:12px;color:#000;letter-spacing:0.263px;right:796.7370000000001px;">1,0000</div>
<div class="t" style="top:605.00px;font-size:12px;color:#000;letter-spacing:0.352px;left:640px;">Správce systému K2</div>
<div class="t" style="top:605.00px;font-size:12px;color:#000;letter-spacing:0.186px;right:157.81399999999996px;">21.05.2015 09:55:43</div>
<div class="a" style="left:105px;top:665px;width:875px;height:26.5px;background:#f0f0f0;border-top:1px solid #d2d2d2;border-bottom:1px solid #d2d2d2;border-left:1px solid #d2d2d2;"></div>
<svg style="left:111px;top:671px;" width="18" height="18" viewBox="0 0 18 18"><path d="M0.8 1 L5.4 7 V15.3 L8.8 7 L13.2 1 Z" stroke="#1b5cad" stroke-width="1.25" fill="none" stroke-linejoin="bevel"/><path d="M0.8 1 H13.2" stroke="#1b5cad" stroke-width="1.8"/><path d="M11.2 14.3 H16.2 L13.7 16.8 Z" fill="#1b5cad"/></svg>
<div class="a" style="left:130px;top:668px;width:1px;height:21px;background:#d0d0d0;"></div>
<svg style="left:136px;top:671px;" width="15" height="15" viewBox="0 0 15 15"><path d="M7.5 0.8 V14.2 M1.7 4.15 L13.3 10.85 M13.3 4.15 L1.7 10.85" stroke="#1b5cad" stroke-width="3.2" stroke-linecap="round" fill="none"/><path d="M7.5 1.6 V13.4 M2.4 4.55 L12.6 10.45 M12.6 4.55 L2.4 10.45" stroke="#f0f0f0" stroke-width="1.1" fill="none"/><circle cx="7.5" cy="7.5" r="1.2" fill="#f0f0f0"/></svg>
<div class="t" style="top:673.00px;font-size:12px;color:#2a5cb0;left:160px;">0</div>
<div class="a" style="left:173.5px;top:668px;width:1px;height:21px;background:#d0d0d0;"></div>
<div class="t" style="top:673.00px;font-size:12px;color:#2a5cb0;letter-spacing:-0.234px;left:180.5px;">Počet záznamů: 7</div>
<div class="a" style="left:279.5px;top:668px;width:1px;height:21px;background:#d0d0d0;"></div>
<div class="a" style="left:903px;top:668px;width:1px;height:21px;background:#d0d0d0;"></div>
<svg style="left:910px;top:671px;" width="14" height="15" viewBox="0 0 14 15"><path d="M12.5 1 H1.5 L7.5 7.3 L1.5 13.6 H12.5" stroke="#1b5cad" stroke-width="1.5" fill="none" stroke-linejoin="miter"/></svg>
<div class="a" style="left:929px;top:668px;width:1px;height:21px;background:#d0d0d0;"></div>
<svg style="left:935px;top:671px;" width="16" height="16" viewBox="0 0 16 16"><path d="M1 14.3 L2 10.8 L10.5 2.3 Q12 1 13.5 2.5 Q14.8 4 13.5 5.3 L5 13.8 Z M9.5 3.3 L12.5 6.3" stroke="#1b5cad" stroke-width="1.3" fill="none"/><path d="M7.3 14.6 H15" stroke="#1b5cad" stroke-width="1.5"/></svg>
<svg style="left:957px;top:670px;" width="20" height="19" viewBox="0 0 20 19"><path d="M0.7 0.7 H13.8 V2.3 M0.7 0.7 V13.5 H2.4" stroke="#1b5cad" stroke-width="1.3" fill="none"/><rect x="2.7" y="2.7" width="13.6" height="12.4" stroke="#1b5cad" stroke-width="1.3" fill="#f0f0f0"/><path d="M5.3 6.3 H6.3 M7.6 6.3 H14 M5.3 8.8 H6.3 M7.6 8.8 H14 M5.3 11.3 H6.3 M7.6 11.3 H11" stroke="#1b5cad" stroke-width="1.1"/><circle cx="14.6" cy="13.8" r="4.3" stroke="#1b5cad" stroke-width="1.3" fill="#f0f0f0"/><path d="M14.6 11.6 V16 M12.4 13.8 H16.8" stroke="#1b5cad" stroke-width="1.4"/></svg>
</body></html>
